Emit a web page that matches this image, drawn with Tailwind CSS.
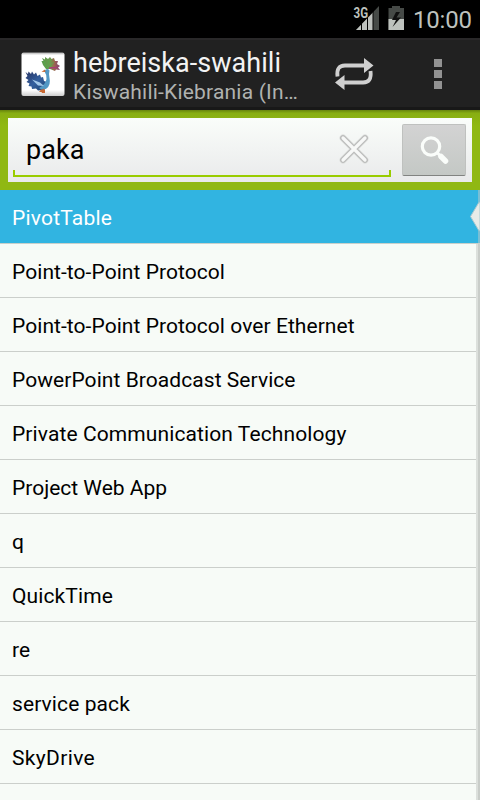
<!DOCTYPE html>
<html lang="sv">
<head>
<meta charset="utf-8">
<title>hebreiska-swahili</title>
<script src="https://cdn.jsdelivr.net/npm/@tailwindcss/browser@4"></script>
</head>
<body class="w-[480px] h-[800px] overflow-hidden bg-[#f7fbf7] font-['Roboto',sans-serif]">
<div class="relative flex flex-col w-[480px] h-[800px] overflow-hidden">
  <div class="h-[38px] shrink-0 bg-black flex items-center justify-end">
    <svg class="w-[60px] h-[38px] shrink-0" viewBox="350 0 60 38">
      <path d="M356 30L379 6V30Z" fill="#464a47"/>
      <path d="M356 30L373 12.500V30Z" fill="#bec2be"/>
      <path d="M361.500 22V30M367.500 17V30M373 11V30" stroke="#000" stroke-width="1"/>
      <path d="M353 6H369V14L366 18H353Z" fill="#000"/>
      <text x="353.500" y="17.500" font-size="14" font-weight="700" fill="#bec2be" textLength="14.500" lengthAdjust="spacingAndGlyphs">3G</text>
      <path d="M388.500 8H392V6H400V8H404V30H388.500Z" fill="#464a47"/>
      <path d="M388.500 19H404V30H388.500Z" fill="#bec2be"/>
      <path d="M396 12L392 20H396L392.500 27L401 17.500H396.500L400 12Z" fill="#101010"/>
    </svg>
    <div class="w-[70px] pl-[3px] pt-[2px] text-[24px] leading-[38px] tracking-[-0.2px] text-[#bec2be] whitespace-nowrap">10:00</div>
  </div>
  <div class="h-[72px] shrink-0 bg-[#212121] border-t-2 border-t-[#292829] border-b-[3px] border-b-[#181818] flex">
    <svg class="ml-[20px] mt-[11px] w-[46px] h-[46px] shrink-0" viewBox="20 51 46 46">
      <defs>
        <linearGradient id="tile" x2="0" y2="1"><stop offset="0" stop-color="#aaa"/><stop offset=".06" stop-color="#fff"/><stop offset=".86" stop-color="#fff"/><stop offset="1" stop-color="#ccc"/></linearGradient>
        <linearGradient id="crest"><stop offset="0" stop-color="#5a9a4c"/><stop offset=".5" stop-color="#6d9a50"/><stop offset=".68" stop-color="#9a6a4c"/><stop offset="1" stop-color="#843a78"/></linearGradient>
        <linearGradient id="wing" x2="1" y2="1"><stop offset="0" stop-color="#253262"/><stop offset=".5" stop-color="#34609f"/><stop offset="1" stop-color="#1c3f6b"/></linearGradient>
      </defs>
      <rect x="21.500" y="52.500" width="43" height="43.500" rx="2" fill="url(#tile)"/>
      <path d="M46 69L43 65L41.500 61L43.500 61L42 58L45 59.500L45 57L48 59L50 57L51.500 59L54 58L55 61L58 61L57 64L60 66L58 67.500L60 70L56 69.500L55 71L50 69Z" fill="url(#crest)"/>
      <path d="M46 68L44 61M47 68L49 60M48 68L54 62" stroke="#58a84d" stroke-width=".8"/>
      <path d="M49 68L57 67.500" stroke="#ad3a78" stroke-width="1.500"/>
      <path d="M25.500 72L28 74L28.500 71.500L31 74L32 71.500L34 74.500L36 72.500L37.500 76L40 74.500L41 77.500L43 77L44 81L47 82L48 86L44 90L38 90.500L36 88.500L32 89L31.500 86.500L28.500 86L29.500 83.500L26.500 82L28.500 80L25.500 78L27.500 76Z" fill="url(#wing)"/>
      <path d="M44.500 71Q47 67.500 49.500 70.500Q48.500 74 49.500 78Q51 85 46.500 88.500Q42 91 39 88Q46 84 46.500 79Q47 75 45 72.500Z" fill="#5298c4"/>
      <path d="M32 79.500L40 82.500L44 86L38 85.500Z" fill="#a4c9ea"/>
      <path d="M45 69.500L41.500 71.800L45.500 72ZM41 89.500H43.500V92H39ZM43.500 88.500L45 90V93H41.500Z" fill="#c96832"/>
    </svg>
    <div class="ml-[7px] w-[232px] whitespace-nowrap pt-[6px]">
      <div class="text-[27px] leading-[34px] text-[#f3f3f3] tracking-[0.04px]">hebreiska-swahili</div>
      <div class="text-[21px] leading-[24px] text-[#b0b2b0] tracking-[0.2px]">Kiswahili-Kiebrania (In…</div>
    </div>
    <svg class="ml-auto w-[160px] h-[67px] shrink-0" viewBox="320 40 160 67">
      <g fill="none" stroke="#d0d0d0" stroke-width="3.800">
        <path d="M337.500 76.500Q336 65.500 345 65.500H366"/><path d="M370.500 71Q372 82.500 363 82.500H343"/>
      </g>
      <path d="M364 58L373.500 65.500L364 73ZM344.500 75V90L335 82.500Z" fill="#d0d0d0"/>
      <path d="M434 59h8v8h-8zM434 70h8v8h-8zM434 81h8v8h-8z" fill="#929292"/>
    </svg>
  </div>
  <div class="h-[80px] shrink-0 bg-[#90b813] bg-linear-to-b from-[#67840d] from-0% via-[#88ae12] via-4% to-[#90b813] to-20% px-[8px] pt-[8px]">
    <div class="h-[64px] bg-linear-to-b from-[#fafdfa] to-[#e9eaeb] flex">
      <div class="ml-[5px] mt-[6px] w-[378px] h-[53px] flex relative">
        <div class="absolute left-0 bottom-0 w-full h-[7px] border-2 border-t-0 border-[#99cc00]"></div>
        <div class="pl-[13px] text-[27px] leading-[53px] tracking-[0.1px] text-black">paka</div>
        <svg class="ml-auto mr-[20px] mt-[8px] w-[34px] h-[34px]" viewBox="337 132 34 34">
          <path d="M343 138L365 160M365 138L343 160" stroke="#dedfde" stroke-width="7" stroke-linecap="round"/>
          <path d="M343 138L365 160M365 138L343 160" stroke="#bbbcbb" stroke-width="5.800" stroke-linecap="round"/>
          <path d="M343 138L365 160M365 138L343 160" stroke="#f7f8f7" stroke-width="3.200" stroke-linecap="round"/>
        </svg>
      </div>
      <div class="ml-[11px] mt-[6px] w-[64px] h-[52px] rounded-[2px] bg-linear-to-b from-[#d3d3d3] to-[#c4c8c5] border border-[#bfc1bf] border-b-[#818381]">
        <svg class="w-[62px] h-[50px]" viewBox="403 125 62 50">
          <circle cx="431" cy="146.500" r="8.700" fill="none" stroke="#fafdfa" stroke-width="3.200"/>
          <path d="M437 152.500L440 155.500" stroke="#fafdfa" stroke-width="3"/>
          <path d="M441 156.500L445.500 161" stroke="#fafdfa" stroke-width="5.500" stroke-linecap="round"/>
        </svg>
      </div>
    </div>
  </div>
  <div class="relative w-full text-[21px] leading-[56px] tracking-[0.06px] text-black whitespace-nowrap">
    <div class="h-[54px] pl-[12px] bg-[#31b4e1] border-b border-[#c9d0cb] text-white tracking-[0.2px]">PivotTable</div>
    <div class="h-[54px] pl-[12px] border-b border-[#cbcfcb]">Point-to-Point Protocol</div>
    <div class="h-[54px] pl-[12px] border-b border-[#cbcfcb]">Point-to-Point Protocol over Ethernet</div>
    <div class="h-[54px] pl-[12px] border-b border-[#cbcfcb]">PowerPoint Broadcast Service</div>
    <div class="h-[54px] pl-[12px] border-b border-[#cbcfcb] tracking-[0.1px]">Private Communication Technology</div>
    <div class="h-[54px] pl-[12px] border-b border-[#cbcfcb] tracking-[0px]">Project Web App</div>
    <div class="h-[54px] pl-[12px] border-b border-[#cbcfcb]">q</div>
    <div class="h-[54px] pl-[12px] border-b border-[#cbcfcb] tracking-[0.12px]">QuickTime</div>
    <div class="h-[54px] pl-[12px] border-b border-[#cbcfcb]">re</div>
    <div class="h-[54px] pl-[12px] border-b border-[#cbcfcb] tracking-[0.1px]">service pack</div>
    <div class="h-[54px] pl-[12px] border-b border-[#cbcfcb] tracking-[0.35px]">SkyDrive</div>
    <div class="h-[54px]"></div>
    <div class="absolute top-[54px] right-0 w-[4px] h-[560px] bg-[#c9cdc9] border-l-2 border-[#dce0dc]"></div>
    <svg class="absolute top-0 right-0 w-[12px] h-[54px]" viewBox="468 190 12 54">
      <path d="M478 190H480V243H478Z" fill="#79bfd5"/>
      <path d="M480 202L478.500 203L470.500 216.500L478.500 230L480 231Z" fill="#e8ebe8" stroke="#a9c9d1" stroke-width="1"/>
    </svg>
  </div>
</div>
</body>
</html>
